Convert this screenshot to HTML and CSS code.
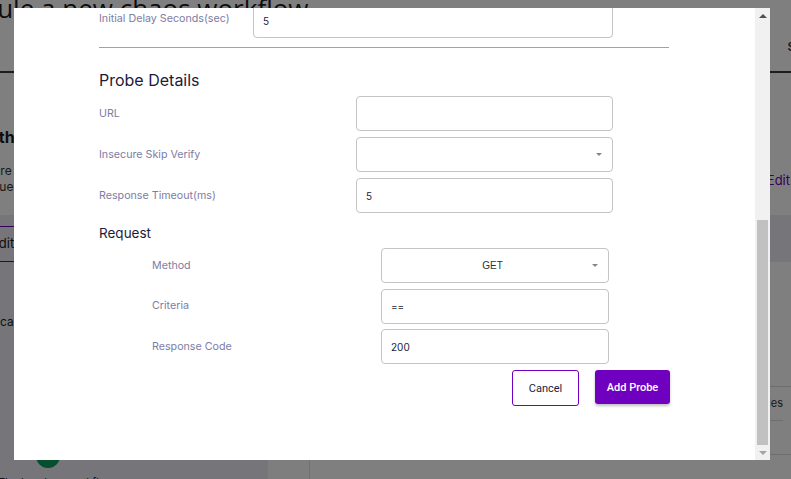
FILE: index.html
```html
<!DOCTYPE html>
<html lang="en">
<head>
<meta charset="utf-8">
<title>Add Probe</title>
<link rel="stylesheet" href="styles.css">
</head>
<body>
<div class="page">
  <header class="page-header">
    <h1 class="page-title">Schedule a new chaos workflow</h1>
    <span class="header-btn">Save</span>
  </header>
  <section class="intro">
    <div class="intro-left">
      <h3 class="intro-title">Tune the workflow</h3>
      <p class="intro-text intro-text1">Here are some of the properties</p>
      <p class="intro-text intro-text2">Value to be tuned</p>
    </div>
    <span class="intro-edit">Edit</span>
  </section>
  <section class="band">
    <div class="band-left"><span class="tab">Edit</span></div>
    <div class="band-right"></div>
  </section>
  <section class="lower">
    <div class="lower-left">
      <p class="lower-text">pod-delete-call-test</p>
      <span class="green-dot"></span>
      <p class="lower-caption">The headers workflow</p>
    </div>
    <div class="lower-gap"></div>
    <div class="lower-right">
      <div class="trow"></div>
      <div class="trow trow-text">Properties</div>
      <div class="trow"></div>
    </div>
  </section>
</div>

<div class="backdrop"></div>

<div class="modal">
  <div class="modal-body">
    <div class="scroll-content">
      <div class="row-delay">
        <label class="label">Initial Delay Seconds(sec)</label>
        <input class="field field-delay" value="5">
      </div>
      <hr class="divider">
      <h2 class="section-title">Probe Details</h2>
      <div class="probe-grid">
        <label class="label">URL</label>
        <input class="field" value="">
        <label class="label">Insecure Skip Verify</label>
        <div class="field select"><span class="select-value"></span><span class="caret"></span></div>
        <label class="label">Response Timeout(ms)</label>
        <input class="field" value="5">
      </div>
      <h3 class="sub-title">Request</h3>
      <div class="request-grid">
        <label class="label">Method</label>
        <div class="field select"><span class="select-value">GET</span><span class="caret"></span></div>
        <label class="label">Criteria</label>
        <input class="field" value="==">
        <label class="label">Response Code</label>
        <input class="field" value="200">
      </div>
      <div class="actions">
        <button class="btn btn-outline">Cancel</button>
        <button class="btn btn-primary">Add Probe</button>
      </div>
    </div>
  </div>
  <div class="scrollbar">
    <div class="sb-btn"><span class="sb-up"></span></div>
    <div class="sb-track"><div class="sb-thumb"></div></div>
    <div class="sb-btn"><span class="sb-down"></span></div>
  </div>
</div>
</body>
</html>
```

FILE: styles.css
```css
* { box-sizing: border-box; }
html, body { margin: 0; padding: 0; }
body {
  width: 791px;
  height: 479px;
  overflow: hidden;
  font-family: Inter, "Noto Sans", sans-serif;
  background: #ffffff;
}

/* ---------- background page ---------- */
.page {
  width: 791px;
  height: 479px;
  display: flex;
  flex-direction: column;
  overflow: hidden;
  color: #1a1a1a;
}
.page-header {
  height: 73px;
  flex: none;
  display: flex;
  justify-content: space-between;
  border-bottom: 2px solid #3a3a3a;
}
.page-title {
  margin: -9px 0 0 -76px;
  font-family: "Open Sans", sans-serif;
  font-weight: 400;
  font-size: 26px;
  line-height: 34px;
  white-space: nowrap;
}
.header-btn {
  margin: 39px -25px 0 0;
  font-size: 12px;
  font-weight: 600;
  color: #333;
}
.intro {
  height: 142px;
  flex: none;
  display: flex;
  justify-content: space-between;
}
.intro-title {
  margin: 54px 0 0 -44px;
  font-size: 16px;
  line-height: 20px;
  font-weight: 700;
  white-space: nowrap;
}
.intro-text {
  margin: 0;
  font-size: 12px;
  line-height: 16px;
  color: #333;
  white-space: nowrap;
}
.intro-text1 { margin: 16px 0 0 -37px; }
.intro-text2 { margin: 0 0 0 -18px; }
.intro-edit {
  margin: 99px 1px 0 0;
  font-size: 13px;
  color: #6a00b8;
}
.band {
  height: 47px;
  flex: none;
  display: flex;
  background: #ececf4;
}
.band-left { width: 268px; padding-top: 11px; }
.tab {
  display: block;
  height: 36px;
  border-top: 1px solid #6a00b8;
  border-bottom: 1px solid #6a00b8;
  width: 120px;
  margin-left: -9px;
  font-size: 13px;
  line-height: 33px;
}
.band-right { flex: 1; }
.lower {
  flex: 1;
  display: flex;
}
.lower-left {
  width: 268px;
  background: #ececf4;
  padding-top: 52px;
}
.lower-text {
  margin: 0 0 0 -68px;
  font-size: 12px;
  color: #222;
  white-space: nowrap;
}
.green-dot {
  display: block;
  width: 24px;
  height: 24px;
  border-radius: 50%;
  background: #0f9b5e;
  margin: 115px 0 0 36px;
}
.lower-caption {
  margin: 7px 0 0 -2px;
  font-size: 11px;
  color: #222;
  white-space: nowrap;
}
.lower-gap {
  width: 42px;
  border-right: 1px solid #e2e2e2;
  background: #fdfdfd;
}
.lower-right {
  flex: 1;
  padding-top: 124px;
}
.trow {
  height: 34px;
  border-bottom: 1px solid #dcdcdc;
}
.trow:first-child { height: 1px; }
.trow-text {
  text-align: right;
  font-size: 11px;
  line-height: 32px;
  color: #333;
  margin-right: 8px;
}

.backdrop {
  position: fixed;
  inset: 0;
  background: rgba(0, 0, 0, 0.5);
}

/* ---------- modal ---------- */
.modal {
  position: fixed;
  left: 14px;
  top: 8px;
  width: 756px;
  height: 452px;
  background: #ffffff;
  display: flex;
  overflow: hidden;
}
.modal-body {
  flex: 1;
  overflow: hidden;
  padding-left: 85px;
}
.scroll-content {
  margin-top: -5px;
  width: 571px;
}
.label {
  font-size: 10.7px;
  line-height: 14px;
  color: #7d7da5;
  white-space: nowrap;
}
.field {
  display: block;
  height: 35px;
  border: 1px solid #c4c4c4;
  border-radius: 4px;
  background: #fff;
  font-family: Inter, "Noto Sans", sans-serif;
  font-size: 10px;
  color: #1c1c3c;
  padding: 0 0 0 9px;
  outline: none;
  width: 100%;
}
.row-delay {
  display: flex;
  align-items: center;
}
.row-delay .label { width: 154px; margin-top: -3px; }
.field-delay { width: 360px; }
.divider {
  margin: 9px 0 0;
  width: 570px;
  border: none;
  border-top: 1px solid #a3a3a3;
  height: 0;
}
.section-title {
  margin: 22px 0 6px;
  font-size: 16px;
  line-height: 20px;
  font-weight: 400;
  color: #1c1c3c;
}
.probe-grid {
  display: grid;
  grid-template-columns: 257px 257px;
  row-gap: 6px;
  align-items: center;
}
.sub-title {
  margin: 11px 0 6px;
  font-size: 13.5px;
  line-height: 18px;
  font-weight: 400;
  color: #1c1c3c;
}
.request-grid {
  display: grid;
  grid-template-columns: 229px 228px;
  row-gap: 5.5px;
  padding-left: 53px;
  align-items: center;
}
.select {
  display: flex;
  align-items: center;
  padding: 0 10px 0 9px;
}
.select-value {
  flex: 1;
  text-align: center;
  font-family: "Liberation Sans", Arial, sans-serif;
  font-size: 10px;
  color: #333;
  padding-left: 2px;
}
.caret {
  width: 0;
  height: 0;
  border-left: 3px solid transparent;
  border-right: 3px solid transparent;
  border-top: 3px solid #858585;
}
.actions {
  display: flex;
  justify-content: flex-end;
  align-items: flex-start;
  gap: 16px;
  margin-top: 6px;
  width: 571px;
}
.btn {
  font-family: Roboto, "Liberation Sans", Arial, sans-serif;
  font-size: 11px;
  border-radius: 3px;
  cursor: pointer;
  padding: 0;
}
.btn-outline {
  width: 67px;
  height: 36px;
  background: #fff;
  border: 1px solid #7000bf;
  color: #1c1c3c;
}
.btn-primary {
  width: 75px;
  height: 34px;
  background: #7000bf;
  border: none;
  color: #fff;
  font-weight: 500;
  box-shadow: 0 2px 3px rgba(0, 0, 0, 0.25);
}

/* ---------- fake scrollbar ---------- */
.scrollbar {
  width: 15px;
  flex: none;
  background: #f1f1f1;
  display: flex;
  flex-direction: column;
}
.sb-btn {
  height: 15px;
  flex: none;
  display: flex;
  align-items: center;
  justify-content: center;
}
.sb-up {
  width: 0; height: 0;
  border-left: 4px solid transparent;
  border-right: 4px solid transparent;
  border-bottom: 4px solid #505050;
}
.sb-down {
  width: 0; height: 0;
  border-left: 4px solid transparent;
  border-right: 4px solid transparent;
  border-top: 4px solid #a3a3a3;
}
.sb-track {
  flex: 1;
  display: flex;
  flex-direction: column;
  justify-content: flex-end;
  padding: 0 2px;
}
.sb-thumb {
  height: 225px;
  background: #c1c1c1;
}
```
